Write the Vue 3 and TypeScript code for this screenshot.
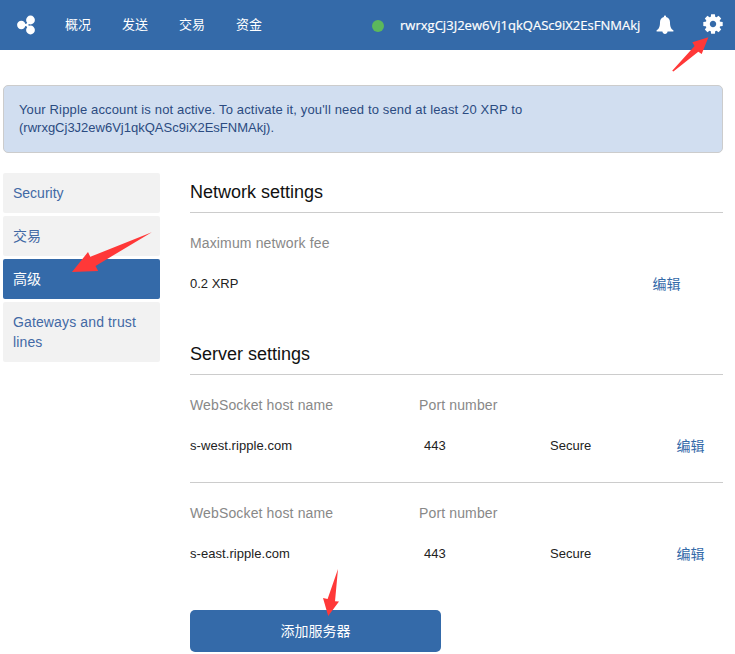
<script setup lang="ts">
interface Server { host: string; port: number }

const address = 'rwrxgCj3J2ew6Vj1qkQASc9iX2EsFNMAkj'
const nav: string[] = ['概况', '发送', '交易', '资金']
const sections: string[] = ['Security', '交易', '高级', 'Gateways and trust lines']
const active = '高级'
const servers: Server[] = [
  { host: 's-west.ripple.com', port: 443 },
  { host: 's-east.ripple.com', port: 443 },
]
const teeth: number[] = [0, 45, 90, 135, 180, 225, 270, 315]
</script>

<template>
  <div class="page">
    <header class="topbar">
      <svg class="logo" width="20" height="20" viewBox="0 0 20 20">
        <path d="M5 10H10.8L14 6M10.8 10L14 14" />
        <circle cx="5.3" cy="10" r="4.2" />
        <circle cx="14.5" cy="5" r="4.4" />
        <circle cx="14.5" cy="15" r="4.4" />
      </svg>
      <nav class="nav">
        <a v-for="item in nav" :key="item">{{ item }}</a>
      </nav>
      <div class="account">
        <span class="status"></span>
        <span class="address">{{ address }}</span>
        <svg class="bell" width="18" height="20" viewBox="0 0 18 20">
          <path d="M9 .4C9.8.4 10.2 1 10.1 2C12.8 2.7 14 4.7 14 7.2C14 12 15.2 14 17.4 15.2V16.5H11.6C11.4 18.1 10.4 19 9 19S6.6 18.1 6.4 16.5H.6V15.2C2.8 14 4 12 4 7.2C4 4.7 5.2 2.7 7.9 2C7.8 1 8.2.4 9 .4Z" />
        </svg>
        <svg class="gear" width="20" height="20" viewBox="-10 -10 20 20">
          <circle r="5.3" />
          <path v-for="t in teeth" :key="t" d="M-2.4 -6L-1.9 -9.7H1.9L2.4 -6Z" :transform="`rotate(${t})`" />
        </svg>
      </div>
    </header>

    <div class="alert">
      <p class="lead">Your Ripple account is not active. To activate it, you'll need to send at least 20 XRP to</p>
      <p class="wallet">({{ address }}).</p>
    </div>

    <div class="body">
      <aside class="side">
        <a v-for="s in sections" :key="s" :class="{ active: s === active }">{{ s }}</a>
      </aside>
      <main class="main">
        <h2>Network settings</h2>
        <section class="network">
          <div class="label fee">Maximum network fee</div>
          <div class="row">
            <span class="xrp">0.2 XRP</span>
            <a class="edit">编辑</a>
          </div>
        </section>
        <h2 class="second">Server settings</h2>
        <section v-for="s in servers" :key="s.host" class="server">
          <div class="grid label">
            <span>WebSocket host name</span>
            <span>Port number</span>
          </div>
          <div class="grid row">
            <span class="host">{{ s.host }}</span>
            <span class="port">{{ s.port }}</span>
            <span class="secure">Secure</span>
            <a class="edit">编辑</a>
          </div>
        </section>
        <button class="add">添加服务器</button>
      </main>
    </div>

    <svg class="pointers" width="735" height="654" viewBox="0 0 735 654">
      <path d="M708.4 37.3L692.3 42.3L694.6 46L672.2 70.8L673.4 71.6L698.3 51.8L701.7 53.9Z" />
      <path d="M72 272L88 252L90.3 256.8L151.8 232.2L95.5 266L98.2 271Z" />
      <path d="M328.2 616L323 598L327.6 599L338 569L335 601.3L339 601.6Z" />
    </svg>
  </div>
</template>

<style>
body { margin: 0; background: #fff; }
</style>

<style scoped>
.page { position: relative; width: 735px; height: 654px; overflow: hidden; font-family: "Liberation Sans", "Noto Sans CJK SC", sans-serif; font-size: 13px; color: #222; }
.topbar { display: flex; align-items: center; height: 50px; box-sizing: border-box; padding-left: 16px; background: #346aa9; color: #fff; }
.logo { fill: #fff; }
.logo path { fill: none; stroke: #fff; stroke-width: 2.2; }
.nav { display: flex; gap: 31px; margin-left: 29px; line-height: 20px; }
.nav a { width: 26px; white-space: nowrap; }
.account { display: flex; align-items: center; margin-left: 110px; }
.status { width: 12px; height: 12px; margin-top: 2px; border-radius: 50%; background: #5cb85c; }
.address { width: 240px; margin-left: 16px; font-family: "Open Sans", sans-serif; line-height: 20px; letter-spacing: .02px; -webkit-text-stroke: .2px #fff; white-space: nowrap; }
.bell { margin-left: 16px; fill: #fff; }
.gear { margin: -2px 0 0 29px; fill: #fff; }
.gear circle { fill: none; stroke: #fff; stroke-width: 4.2; }
.alert { box-sizing: border-box; width: 720px; height: 68px; margin: 35px 0 0 3px; padding: 15px; border: 1px solid #ccc; border-radius: 5px; background: #d1def0; color: #2b4b81; line-height: 18px; }
.alert p { margin: 0; white-space: nowrap; }
.alert .lead { letter-spacing: .142px; }
.body { display: flex; margin: 20px 12px 0 3px; }
.side { display: flex; flex-direction: column; gap: 3px; width: 157px; margin-right: 30px; }
.side a { padding: 10px; border-radius: 2px; background: #f2f2f2; color: #4269a5; font-size: 14px; line-height: 20px; }
.side a:last-child { letter-spacing: .13px; }
.side a.active { background: #346aa9; color: #fff; }
.main { width: 533px; }
h2 { box-sizing: border-box; height: 40px; margin: 0; padding-top: 8px; border-bottom: 1px solid #ccc; font-size: 18px; font-weight: 400; line-height: 22px; color: #111; }
.label { color: #888; font-size: 14px; line-height: 20px; letter-spacing: .14px; }
.network { height: 122px; box-sizing: border-box; padding-top: 20px; }
.row { line-height: 20px; margin-top: 21px; }
.network .row { display: flex; justify-content: space-between; padding-right: 42.5px; }
.edit { color: #346aa9; font-size: 14px; }
.grid { display: grid; grid-template-columns: 229px 131px 126.5px 46.5px; }
.server { box-sizing: border-box; height: 108px; padding-top: 20px; border-bottom: 1px solid #ccc; }
.server:nth-last-of-type(1) { border-bottom: 0; }
.host { letter-spacing: .06px; }
.port { padding-left: 5px; }
.add { display: block; width: 251px; height: 42px; margin: 19px 0 0; padding: 0; border: 0; border-radius: 5px; background: #346aa9; color: #fff; font-family: inherit; font-size: 14px; line-height: 42px; }
.pointers { position: absolute; top: 0; left: 0; fill: #ff3838; pointer-events: none; }
</style>
